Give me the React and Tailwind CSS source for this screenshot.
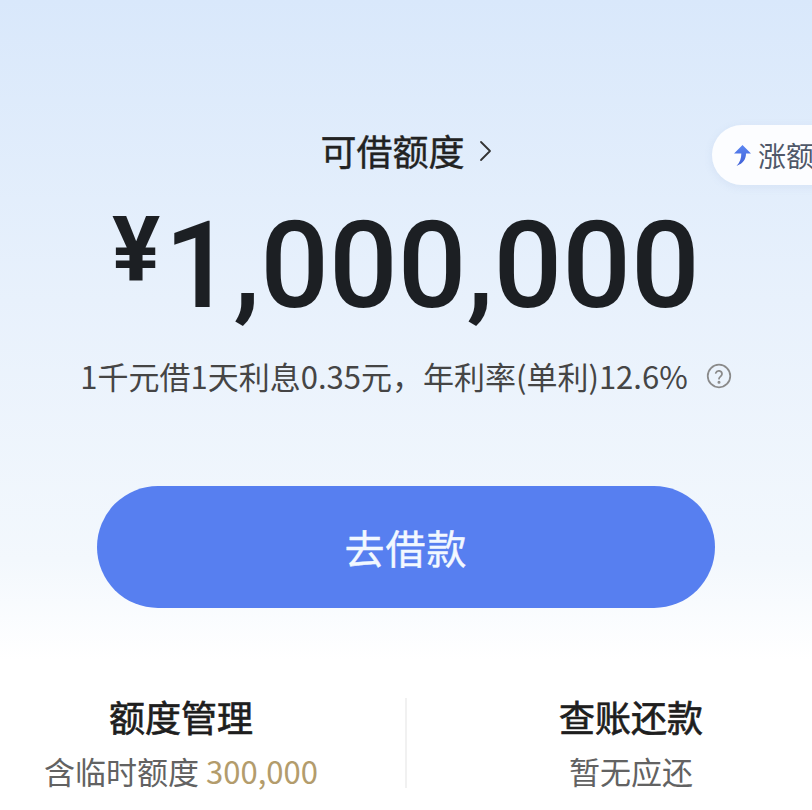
import React from 'react';

const cjk = { fontFamily: '"Noto Sans CJK SC", "Noto Sans", sans-serif' };
const num = { fontFamily: 'Roboto, "Noto Sans", sans-serif' };

// little curved arrow used on the "涨额度" pill
function RaiseArrow() {
  return (
    <svg width="19" height="23" viewBox="0 0 19 23">
      <defs>
        <linearGradient id="arr" x1="0" y1="0" x2="0" y2="1">
          <stop offset="0" stopColor="#5b86f2" />
          <stop offset="1" stopColor="#3f5fd6" />
        </linearGradient>
      </defs>
      <path d="M9.5 1 L18 9.6 H13 C13 15 10.5 19.5 3.5 22 C7 18.5 8.3 14.5 8.3 9.6 H1 Z" fill="url(#arr)" />
    </svg>
  );
}

function HelpIcon() {
  return (
    <svg width="26" height="26" viewBox="0 0 24 24" fill="none" stroke="#8a8a8a" strokeWidth="1.6" strokeLinecap="round">
      <circle cx="12" cy="12" r="10.4" />
      <path d="M9 9.2a3 3 0 0 1 5.8 1c0 2-2.8 2.6-2.8 4.3" />
      <circle cx="12" cy="17.8" r="0.6" fill="#8a8a8a" />
    </svg>
  );
}

export default function App() {
  return (
    <div
      className="relative w-[812px] h-[810px] overflow-hidden bg-[linear-gradient(180deg,#d9e8fb_0px,#e8f1fc_300px,#f3f8fd_560px,#ffffff_660px)]"
      style={cjk}
    >
      {/* raise-limit pill, runs off the right edge like in the app */}
      <div className="absolute left-[712px] top-[125px] h-[60px] w-[140px] rounded-l-full bg-white/90 shadow-[0_2px_8px_rgba(120,150,200,0.12)] flex items-center pl-[21px] gap-[6px]">
        <RaiseArrow />
        <span className="text-[28px] leading-none text-[#4f5869] whitespace-nowrap">涨额度</span>
      </div>

      <div className="flex flex-col items-center pt-[130px]">
        <div className="flex items-center h-[40px]">
          <span className="text-[36px] leading-[40px] text-[#222] [-webkit-text-stroke:0.4px_#222]">可借额度</span>
          <svg className="ml-[14px] mt-[2px]" width="13" height="22" viewBox="0 0 13 22" fill="none" stroke="#333" strokeWidth="1.8" strokeLinecap="round" strokeLinejoin="round">
            <path d="M2 2 L11 11 L2 20" />
          </svg>
        </div>

        <div className="flex items-start mt-[36px] text-[#1c1f23]" style={num}>
          <span className="text-[90px] leading-none font-bold">¥</span>
          <span className="ml-[4px] text-[121px] leading-none font-medium">1,000,000</span>
        </div>

        <div className="flex items-center mt-[29px] h-[40px]">
          <span className="text-[31px] leading-[40px] text-[#454545]">1千元借1天利息0.35元，年利率(单利)12.6%</span>
          <span className="ml-[18px] flex"><HelpIcon /></span>
        </div>

        <button className="mt-[90px] w-[618px] h-[122px] rounded-full bg-[#577ff0] flex items-center justify-center">
          <span className="text-[40px] leading-none text-[#f2f8ff] tracking-[1px] [-webkit-text-stroke:0.4px_#f2f8ff]">去借款</span>
        </button>
      </div>

      <div className="flex mt-[86px]">
        <div className="w-[362px] flex flex-col items-center">
          <span className="text-[36px] leading-[44px] text-[#1e1e1e] [-webkit-text-stroke:0.7px_#1e1e1e]">额度管理</span>
          <span className="mt-[13px] text-[31px] leading-[40px] text-[#626262]">
            含临时额度 <span className="text-[#b39c6c]">300,000</span>
          </span>
        </div>
        <div className="flex-1 flex justify-center items-center">
          <div className="w-[2px] h-[90px] bg-[#f1f1f1]" />
        </div>
        <div className="w-[362px] flex flex-col items-center">
          <span className="text-[36px] leading-[44px] text-[#1e1e1e] [-webkit-text-stroke:0.7px_#1e1e1e]">查账还款</span>
          <span className="mt-[13px] text-[31px] leading-[40px] text-[#626262]">暂无应还</span>
        </div>
      </div>
    </div>
  );
}
